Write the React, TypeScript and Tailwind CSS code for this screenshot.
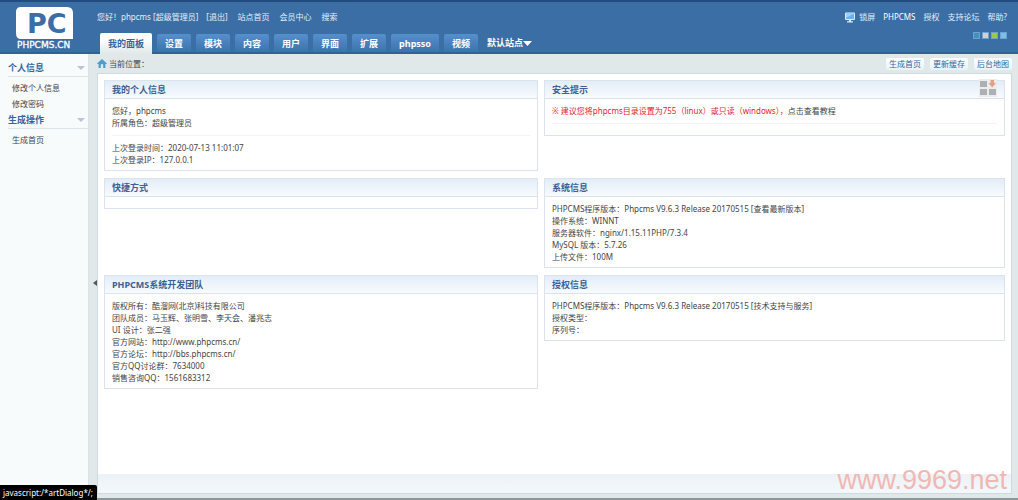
import React from "react";

type PanelProps = {
  title: string;
  children?: React.ReactNode;
};

const tabs = ["我的面板", "设置", "模块", "内容", "用户", "界面", "扩展", "phpsso", "视频"];
const userLinks = ["站点首页", "会员中心", "搜索"];
const helpLinks = ["授权", "支持论坛", "帮助?"];
const shortcuts = ["生成首页", "更新缓存", "后台地图"];
const skins = [
  { name: "默认", color: "bg-[#3f93bd]" },
  { name: "灰色", color: "bg-[#cfd2d4]" },
  { name: "绿色", color: "bg-[#9ccc3c]" },
  { name: "蓝色", color: "bg-[#7cc0ea]" },
];
const menus = [
  { title: "个人信息", items: ["修改个人信息", "修改密码"] },
  { title: "生成操作", items: ["生成首页"] },
];

const Logo = () => (
  <svg width="60" height="44" viewBox="0 0 60 44" role="img" aria-label="PHPCMS.CN">
    <path d="M6 1H52Q58 1 58 7V33H6Q1 33 1 27V6Q1 1 6 1Z" fill="#fff" />
    <text x="12" y="27" fontSize="27" fontWeight="bold" fill="#3b6ea5" fontFamily="DejaVu Sans, sans-serif">
      PC
    </text>
    <text x="2" y="42" fontSize="9" fill="#fff" stroke="#fff" strokeWidth="0.3" fontFamily="DejaVu Sans, sans-serif">
      PHPCMS.CN
    </text>
  </svg>
);

const MonitorIcon = () => (
  <svg width="10" height="11" viewBox="0 0 10 11" aria-hidden="true">
    <rect x="0" y="0.5" width="10" height="7.5" rx="1" fill="#d9ecfb" />
    <rect x="1" y="1.5" width="8" height="5.5" fill="#66b1ee" />
    <path d="M1 1.5H9L1 6Z" fill="#9bd0f7" />
    <path d="M4 8H6V9.2H8V10.5H2V9.2H4Z" fill="#dfe9f2" />
  </svg>
);

const HomeIcon = () => (
  <svg width="10" height="9" viewBox="0 0 10 9" aria-hidden="true">
    <path d="M5 0L10 4.4L9 5.2L8.4 4.8V9H6.2V5.6Q5 4.4 3.8 5.6V9H1.6V4.8L1 5.2L0 4.4Z" fill="#4b9fce" />
  </svg>
);

const GridIcon = () => (
  <svg width="18" height="18" viewBox="0 0 18 18" aria-hidden="true">
    <rect width="18" height="18" fill="#ececec" />
    <rect x="1" y="2" width="7" height="6" fill="#adb0b2" />
    <rect x="1" y="10" width="7" height="6" fill="#adb0b2" />
    <rect x="10" y="10" width="7" height="6" fill="#adb0b2" />
    <path d="M11.5 1H15V4H17L13.2 8.4L9.5 4H11.5Z" fill="#e3a183" />
  </svg>
);

const Panel = ({ title, children }: PanelProps) => (
  <section className="border border-[#dbe4ee] bg-white">
    <h2 className="h-[18px] border-b border-[#d9e3ec] bg-linear-to-b from-[#e3edf7] to-[#f8fbff] px-[7px] text-[9px] leading-[18px] font-bold text-[#3c5f94]">
      {title}
    </h2>
    <div className="min-h-[11px] px-[7px]">{children}</div>
  </section>
);

const Lines = ({ lines }: { lines: string[] }) => (
  <div className="pt-[6px] pb-[4px] leading-[12px]">
    {lines.map((line) => (
      <p key={line}>{line}</p>
    ))}
  </div>
);

export default function App() {
  return (
    <div className="relative flex min-h-screen flex-col bg-[#e0e8e9] font-['Noto_Sans','Noto_Sans_CJK_SC',sans-serif] text-[8px] leading-[12px] text-[#444]">
      <header className="flex h-[54px] border-t-2 border-b-2 border-t-[#204c80] border-b-[#31619a] bg-[#3b6ea5] text-[#e4eef8]">
        <a href="#" className="w-[97px] shrink-0 pt-[4px] pl-[15px]">
          <Logo />
        </a>
        <div className="flex flex-1 flex-col justify-between">
          <div className="flex items-center gap-[8px] pt-[9px] whitespace-nowrap">
            <span>您好！phpcms [超级管理员]</span>
            <a href="#">[退出]</a>
            <nav className="flex gap-[10px] pl-[2px]">
              {userLinks.map((link) => (
                <a key={link} href="#">
                  {link}
                </a>
              ))}
            </nav>
          </div>
          <nav className="flex items-end gap-[5px] pl-[3px] text-[9px] font-bold whitespace-nowrap">
            {tabs.map((tab, i) => (
              <a
                key={tab}
                href="#"
                className={
                  i === 0
                    ? "-mb-[2px] h-[21px] rounded-t-[2px] bg-linear-to-b from-white from-30% to-[#e0e8e9] px-[8px] leading-[21px] text-[#33649c]"
                    : "h-[18px] rounded-t-[2px] bg-linear-to-b from-[#5590cd] to-[#3d72ac] px-[8px] leading-[20px] text-white"
                }
              >
                {tab}
              </a>
            ))}
            <button type="button" className="flex h-[18px] items-center pl-[4px] text-white">
              默认站点
              <svg width="9" height="5" viewBox="0 0 9 5" aria-hidden="true">
                <path d="M0 0H9L4.5 5Z" fill="#fff" />
              </svg>
            </button>
          </nav>
        </div>
        <div className="flex flex-col items-end pt-[9px] pr-[11px] whitespace-nowrap">
          <nav className="flex items-center gap-[8px]">
            <a href="#" className="flex items-center gap-[4px]">
              <MonitorIcon />
              锁屏
            </a>
            <a href="#" className="text-white">
              PHPCMS
            </a>
            {helpLinks.map((link) => (
              <a key={link} href="#">
                {link}
              </a>
            ))}
          </nav>
          <div className="flex gap-[2px] pt-[9px]">
            {skins.map((skin) => (
              <button
                key={skin.name}
                type="button"
                aria-label={skin.name}
                className={`h-[7px] w-[7px] border border-[#6fa3cf] ${skin.color}`}
              />
            ))}
          </div>
        </div>
      </header>

      <div className="flex flex-1">
        <aside className="w-[88px] shrink-0 bg-[#f7fbfc] pt-[6px] pl-[8px]">
          {menus.map((menu) => (
            <div key={menu.title}>
              <h3 className="flex h-[17px] items-center justify-between border-b border-[#dce6ea] pr-[3px] text-[9px] font-bold text-[#33649c]">
                {menu.title}
                <svg width="8" height="4" viewBox="0 0 8 4" aria-hidden="true">
                  <path d="M0 0H8L4 4Z" fill="#b9c6d2" />
                </svg>
              </h3>
              <ul className="pt-[3px] pl-[4px] leading-[16px]">
                {menu.items.map((item) => (
                  <li key={item}>
                    <a href="#">{item}</a>
                  </li>
                ))}
              </ul>
            </div>
          ))}
        </aside>
        <button type="button" aria-label="收起菜单" className="flex w-[9px] shrink-0 items-center justify-end border-l border-[#d9e3e4] pt-[18px]">
          <svg width="4" height="6" viewBox="0 0 4 6" aria-hidden="true">
            <path d="M4 0V6L0 3Z" fill="#555" />
          </svg>
        </button>

        <div className="flex min-w-0 flex-1 flex-col pr-[6px]">
          <div className="flex h-[19px] items-center justify-between">
            <div className="flex items-center gap-[2px]">
              <HomeIcon />
              <span>当前位置：</span>
            </div>
            <div className="flex gap-[6px]">
              {shortcuts.map((name) => (
                <button key={name} type="button" className="h-[12px] rounded-[2px] bg-linear-to-b from-white to-[#e6f3fa] px-[3px] leading-[12px] text-[#2a6a9c]">
                  {name}
                </button>
              ))}
            </div>
          </div>
          <main className="relative flex flex-1 flex-col border border-[#d0dadc] bg-white">
            <div className="grid flex-1 grid-cols-[434fr_461fr] content-start items-start gap-x-[6px] gap-y-[7px] pt-[6px] pr-[6px] pl-[6px]">
              <Panel title="我的个人信息">
                <div className="border-b border-[#f1f3f5] pt-[6px] pb-[6px]">
                  <p>您好，phpcms</p>
                  <p>所属角色：超级管理员</p>
                </div>
                <Lines lines={["上次登录时间：2020-07-13 11:01:07", "上次登录IP：127.0.0.1"]} />
              </Panel>
              <Panel title="安全提示">
                <div className="mb-[11px] border-b border-[#f1f3f5] pt-[6px] pb-[6px]">
                  <p className="text-[#e8202c]">
                    ※ 建议您将phpcms目录设置为755（linux）或只读（windows），
                    <a href="#" className="text-[#444]">
                      点击查看教程
                    </a>
                  </p>
                </div>
              </Panel>
              <Panel title="快捷方式" />
              <Panel title="系统信息">
                <Lines
                  lines={[
                    "PHPCMS程序版本：Phpcms V9.6.3 Release 20170515 [查看最新版本]",
                    "操作系统：WINNT",
                    "服务器软件：nginx/1.15.11PHP/7.3.4",
                    "MySQL 版本：5.7.26",
                    "上传文件：100M",
                  ]}
                />
              </Panel>
              <Panel title="PHPCMS系统开发团队">
                <Lines
                  lines={[
                    "版权所有：酷溜网(北京)科技有限公司",
                    "团队成员：马玉辉、张明雪、李天会、潘兆志",
                    "UI 设计：张二强",
                    "官方网站：http://www.phpcms.cn/",
                    "官方论坛：http://bbs.phpcms.cn/",
                    "官方QQ讨论群：7634000",
                    "销售咨询QQ：1561683312",
                  ]}
                />
              </Panel>
              <Panel title="授权信息">
                <Lines
                  lines={[
                    "PHPCMS程序版本：Phpcms V9.6.3 Release 20170515 [技术支持与服务]",
                    "授权类型：",
                    "序列号：",
                  ]}
                />
              </Panel>
            </div>
            <div className="h-[19px] bg-linear-to-b from-[#edf2f7] to-[#f3f8fc]" />
            <button type="button" aria-label="布局" className="absolute top-[5px] right-[14px]">
              <GridIcon />
            </button>
          </main>
        </div>
      </div>
      <div className="h-[6px] border-b-2 border-[#8a969c]" />

      <div className="absolute right-[11px] bottom-[6px] font-['Liberation_Sans',sans-serif] text-[27px] leading-[28px] text-[#f0b8b2]">
        www.9969.net
      </div>
      <div className="fixed bottom-0 left-0 h-[15px] w-[97px] rounded-tr-[2px] bg-black pl-[3px] leading-[15px] whitespace-nowrap text-white">
        javascript:/*artDialog*/;
      </div>
    </div>
  );
}
